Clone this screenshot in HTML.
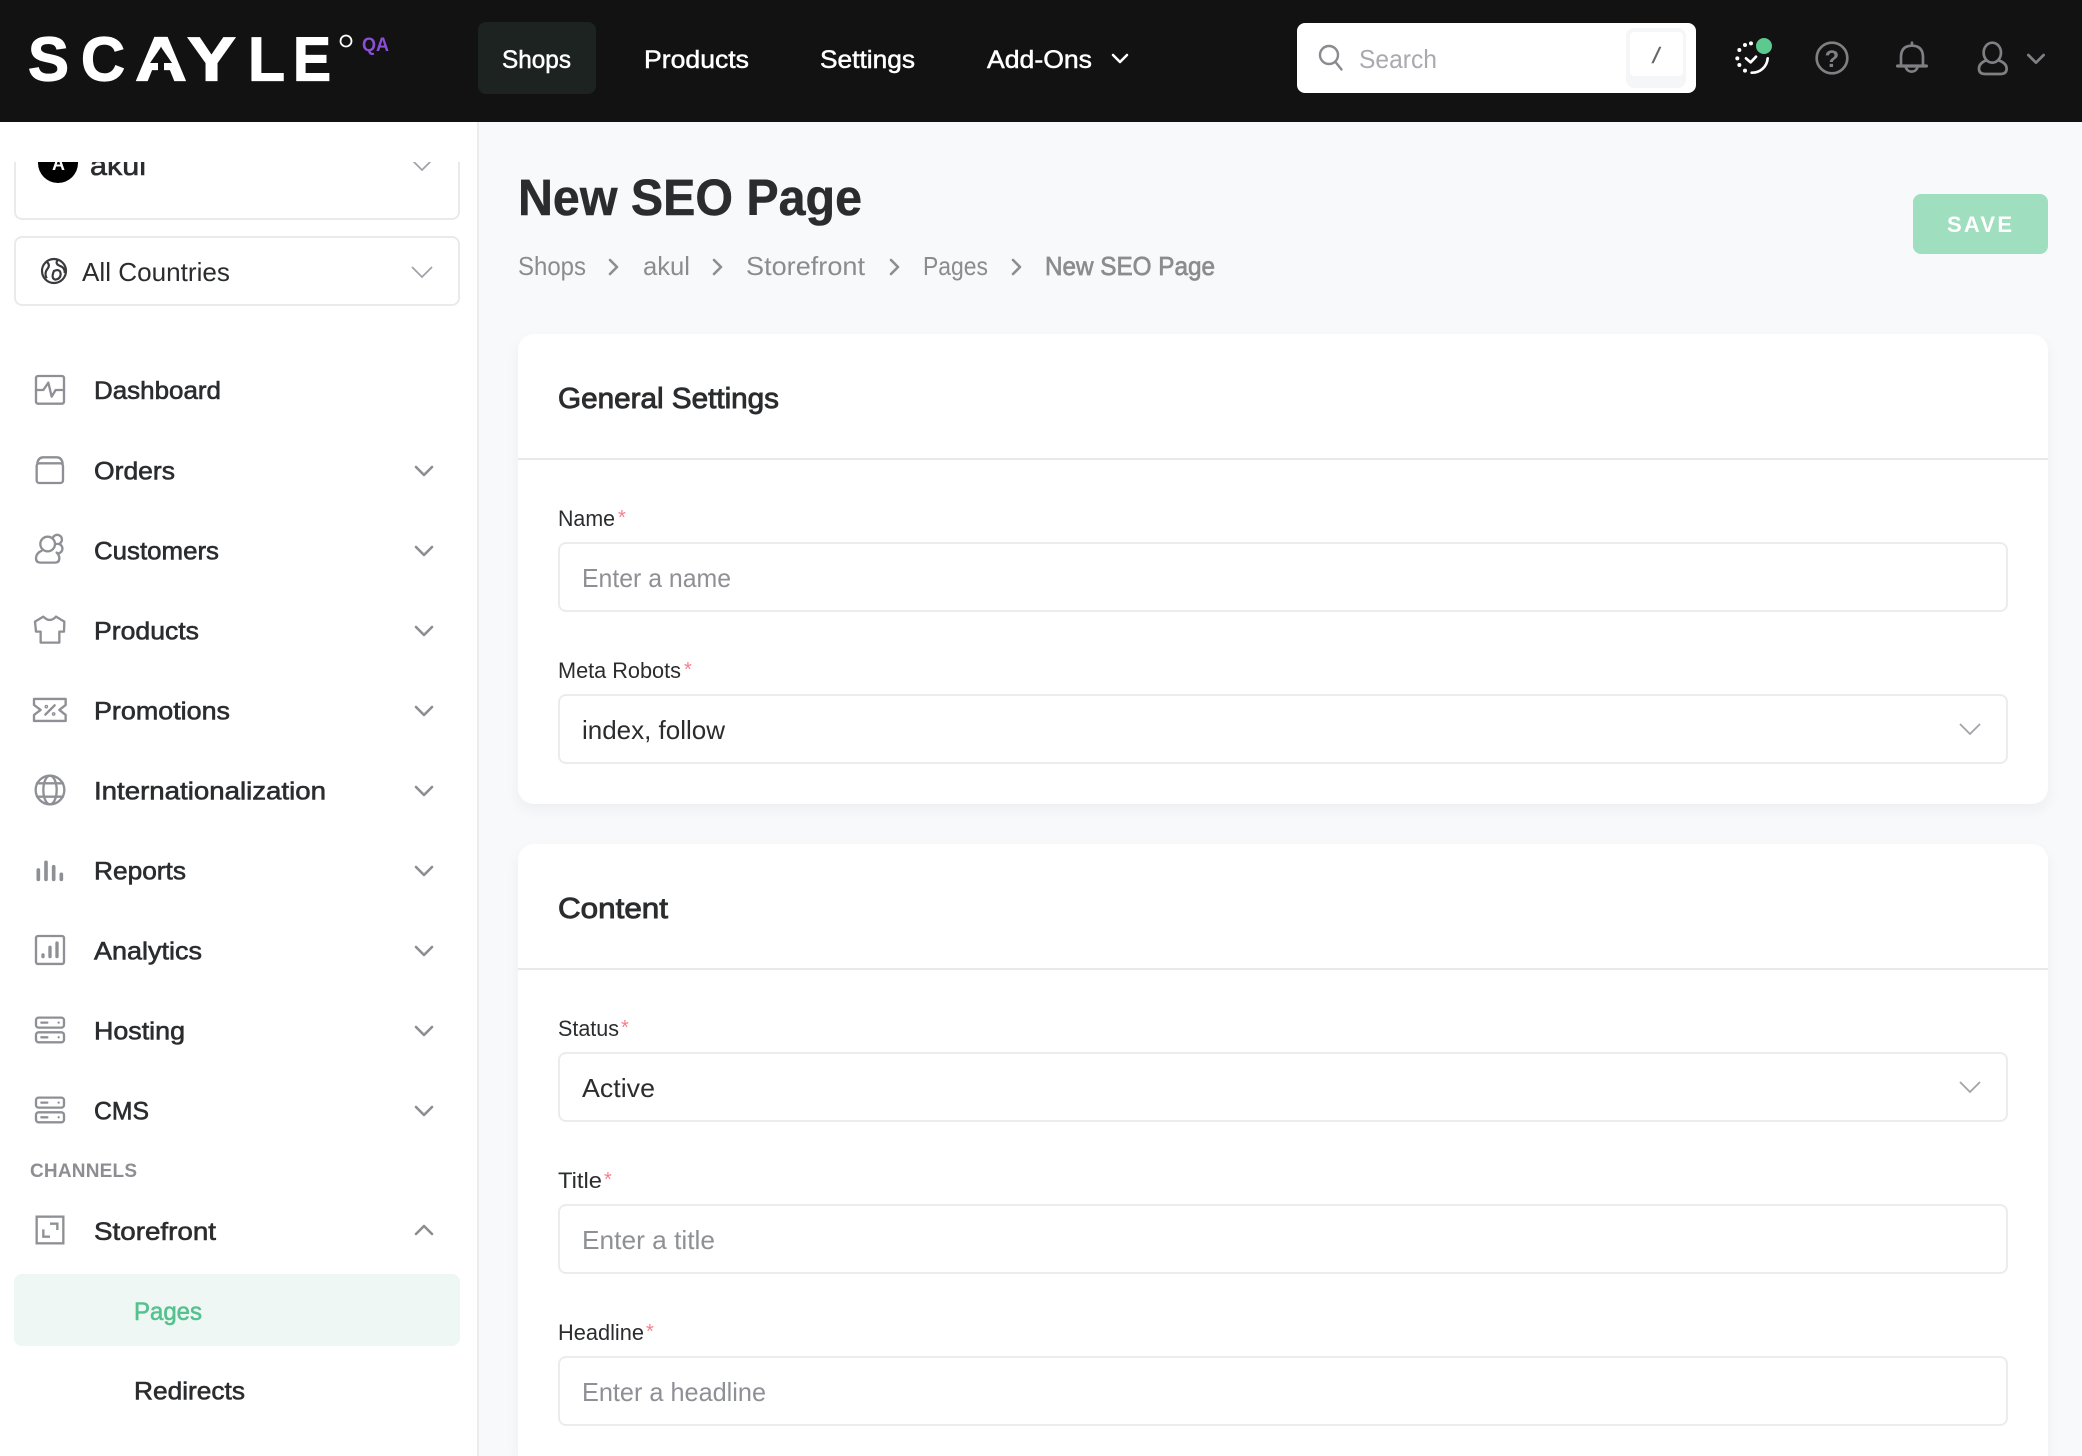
<!DOCTYPE html>
<html lang="en"><head><meta charset="utf-8"><title>New SEO Page</title>
<style>
html,body{margin:0;padding:0;width:2082px;height:1456px;overflow:hidden;background:#f8f9fb;font-family:"Liberation Sans",sans-serif}
.wrap{position:relative;width:2082px;height:1456px;overflow:hidden}
.b{position:absolute;box-sizing:border-box}
.hdr{left:0;top:0;width:2082px;height:122px;background:#121212}
.side{left:0;top:122px;width:479px;height:1334px;background:#fff;border-right:2px solid #ececee}
.card{background:#fff;border-radius:16px;box-shadow:0 6px 14px rgba(30,35,50,.05)}
.inp{background:#fff;border:2px solid #ebecee;border-radius:8px}
svg{position:absolute;left:0;top:0;display:block}
text{font-family:"Liberation Sans",sans-serif}
.n{font-size:25px;fill:#2b2c2e;stroke:#2b2c2e;stroke-width:.6}
.h{font-size:25px;fill:#fff;stroke:#fff;stroke-width:.5}
.c{font-size:26px;fill:#8b8c90}
.l{font-size:22px;fill:#2b2c2e}
.p{font-size:26px;fill:#8f9095}
.v{font-size:26px;fill:#2b2c2e}
.t{font-size:29px;fill:#2b2c2e;stroke:#2b2c2e;stroke-width:.9}
.r{font-size:20px;fill:#f87c8c}
.lg{font-size:62px;font-weight:bold;fill:#fff;stroke:#fff;stroke-width:1.2}
.ic{fill:none;stroke:#8f9095;stroke-width:7;stroke-linecap:round;stroke-linejoin:round}
.ch{fill:none;stroke:#8d8e92;stroke-width:2.6;stroke-linecap:round;stroke-linejoin:round}
.cl{fill:none;stroke:#a3a4a9;stroke-width:1.8}
</style></head><body><div class="wrap">
<div class="b hdr"></div>
<div class="b" style="left:478px;top:22px;width:118px;height:72px;background:#1c2320;border-radius:8px"></div>
<div class="b" style="left:1297px;top:23px;width:399px;height:70px;background:#fff;border-radius:8px"></div>
<div class="b" style="left:1626px;top:28px;width:60px;height:60px;background:#f5f6f8;border-radius:8px"></div>
<div class="b" style="left:1630px;top:32px;width:53px;height:44px;background:#fff;border-radius:4px"></div>
<div class="b side"></div>
<div class="b" style="left:14px;top:162px;width:446px;height:58px;border:2px solid #eaeaec;border-top:0;border-radius:0 0 8px 8px"></div>
<div class="b" style="left:14px;top:236px;width:446px;height:70px;border:2px solid #eaeaec;border-radius:8px"></div>
<div class="b" style="left:14px;top:1274px;width:446px;height:72px;background:#eef7f3;border-radius:8px"></div>
<div class="b" style="left:1913px;top:194px;width:135px;height:60px;background:#9fdfbf;border-radius:8px"></div>
<div class="b card" style="left:518px;top:334px;width:1530px;height:470px"></div>
<div class="b" style="left:518px;top:458px;width:1530px;height:2px;background:#e8e9eb"></div>
<div class="b inp" style="left:558px;top:542px;width:1450px;height:70px"></div>
<div class="b inp" style="left:558px;top:694px;width:1450px;height:70px"></div>
<div class="b card" style="left:518px;top:844px;width:1530px;height:612px;border-radius:16px 16px 0 0"></div>
<div class="b" style="left:518px;top:968px;width:1530px;height:2px;background:#e8e9eb"></div>
<div class="b inp" style="left:558px;top:1052px;width:1450px;height:70px"></div>
<div class="b inp" style="left:558px;top:1204px;width:1450px;height:70px"></div>
<div class="b inp" style="left:558px;top:1356px;width:1450px;height:70px"></div>

<svg width="2082" height="1456" viewBox="0 0 2082 1456" xmlns="http://www.w3.org/2000/svg">
<defs><clipPath id="cp"><rect x="0" y="162" width="479" height="100"/></clipPath></defs>

<!-- logo -->
<text class="lg" x="28" y="80.500" textLength="41" lengthAdjust="spacingAndGlyphs">S</text>
<text class="lg" x="81" y="80.500" textLength="44" lengthAdjust="spacingAndGlyphs">C</text>
<text class="lg" x="135" y="80.500" textLength="52" lengthAdjust="spacingAndGlyphs">A</text>
<text class="lg" x="187" y="80.500" textLength="49" lengthAdjust="spacingAndGlyphs">Y</text>
<text class="lg" x="248" y="80.500" textLength="37" lengthAdjust="spacingAndGlyphs">L</text>
<text class="lg" x="293" y="80.500" textLength="38" lengthAdjust="spacingAndGlyphs">E</text>
<g fill="#121212"><polygon points="161,47 150,63 172,63"/><rect x="158" y="60" width="6" height="14"/></g>
<circle cx="346" cy="41" r="5.5" fill="none" stroke="#fff" stroke-width="1.8"/>
<text x="362" y="51" font-size="19" font-weight="bold" fill="#8a4fd6" textLength="27" lengthAdjust="spacingAndGlyphs">QA</text>

<!-- top nav -->
<text class="h" x="502" y="68" textLength="69" lengthAdjust="spacingAndGlyphs">Shops</text>
<text class="h" x="644" y="68" textLength="105" lengthAdjust="spacingAndGlyphs">Products</text>
<text class="h" x="820" y="68" textLength="95" lengthAdjust="spacingAndGlyphs">Settings</text>
<text class="h" x="987" y="68" textLength="105" lengthAdjust="spacingAndGlyphs">Add-Ons</text>
<path d="M1113 55l7 7 7-7" fill="none" stroke="#fff" stroke-width="2.6" stroke-linecap="round" stroke-linejoin="round"/>

<!-- search -->
<circle cx="1329" cy="55" r="9" fill="none" stroke="#8a8a8f" stroke-width="2.4"/>
<path d="M1335.5 62l6 7.5" stroke="#8a8a8f" stroke-width="2.4" stroke-linecap="round"/>
<text x="1359" y="68" font-size="26" fill="#a9aab0" textLength="78" lengthAdjust="spacingAndGlyphs">Search</text>
<text x="1653" y="63" font-size="22" font-style="italic" fill="#666" stroke="#666" stroke-width=".5">/</text>

<!-- header icons -->
<g transform="translate(1720,30) scale(.3333)" fill="none" stroke-linecap="round" stroke-linejoin="round">
<path d="M143 85A46 46 0 0 1 95 128" stroke="#fff" stroke-width="8"/>
<g fill="#fff"><circle cx="75" cy="122" r="6"/><circle cx="58" cy="105" r="6"/><circle cx="52" cy="85" r="6"/><circle cx="58" cy="60" r="6"/><circle cx="75" cy="45" r="6"/><circle cx="93" cy="40" r="6"/></g>
<path d="M78 85L92 97 108 80" stroke="#fff" stroke-width="8"/>
<circle cx="132" cy="48" r="24" fill="#5cc98f"/>
<g stroke="#808084" stroke-width="8">
<circle cx="336" cy="84" r="46"/>
<path d="M533 108H619" stroke-width="10"/>
<path d="M543 105V82Q543 47 576 47Q609 47 609 82V105"/>
<path d="M576 38V46"/>
<path d="M558 113A18 18 0 0 0 592 113"/>
<ellipse cx="817" cy="68" rx="26" ry="30"/>
<path d="M797 92Q777 100 777 116Q777 132 795 132H842Q860 132 860 116Q860 100 838 92"/>
<path d="M925 75L948 98 971 75"/>
</g>
</g>
<text x="1824.500" y="67" font-size="24" font-weight="bold" fill="#808084">?</text>

<!-- sidebar top -->
<g clip-path="url(#cp)">
<circle cx="58" cy="163" r="20" fill="#000"/>
<text x="52" y="170" font-size="18" font-weight="bold" fill="#fff">A</text>
<text x="90" y="175" class="n" style="font-size:28px" textLength="56" lengthAdjust="spacingAndGlyphs">akul</text>
<path d="M414 162l8 8 8-8" class="cl" stroke-linecap="round"/>
</g>
<g transform="translate(30,245) scale(.3333)" fill="none" stroke="#3a3a3d" stroke-width="6.500">
<circle cx="72" cy="78" r="36"/>
<path d="M50 50Q62 60 52 72Q42 84 50 100M84 44Q74 56 88 62Q106 68 104 84M72 78Q90 70 92 86Q92 102 76 104Q62 100 72 78Z"/>
</g>
<text class="v" x="82" y="281" textLength="148" lengthAdjust="spacingAndGlyphs">All Countries</text>
<path d="M412 267l10 10 10-10" class="cl"/>

<!-- sidebar nav labels -->
<text class="n" x="94" y="399" textLength="127" lengthAdjust="spacingAndGlyphs">Dashboard</text>
<text class="n" x="94" y="479.500" textLength="81" lengthAdjust="spacingAndGlyphs">Orders</text>
<text class="n" x="94" y="559.500" textLength="125" lengthAdjust="spacingAndGlyphs">Customers</text>
<text class="n" x="94" y="639.500" textLength="105" lengthAdjust="spacingAndGlyphs">Products</text>
<text class="n" x="94" y="719.500" textLength="136" lengthAdjust="spacingAndGlyphs">Promotions</text>
<text class="n" x="94" y="799.500" textLength="232" lengthAdjust="spacingAndGlyphs">Internationalization</text>
<text class="n" x="94" y="879.500" textLength="92" lengthAdjust="spacingAndGlyphs">Reports</text>
<text class="n" x="94" y="959.500" textLength="108" lengthAdjust="spacingAndGlyphs">Analytics</text>
<text class="n" x="94" y="1039.500" textLength="91" lengthAdjust="spacingAndGlyphs">Hosting</text>
<text class="n" x="94" y="1119.500" textLength="55" lengthAdjust="spacingAndGlyphs">CMS</text>
<text x="30" y="1177" font-size="19" font-weight="bold" fill="#8d8e92" textLength="107" lengthAdjust="spacing">CHANNELS</text>
<text class="n" x="94" y="1240" textLength="122" lengthAdjust="spacingAndGlyphs">Storefront</text>
<text class="n" x="134" y="1320" style="fill:#55c18f;stroke:#55c18f" textLength="68" lengthAdjust="spacingAndGlyphs">Pages</text>
<text class="n" x="134" y="1399.500" textLength="111" lengthAdjust="spacingAndGlyphs">Redirects</text>

<!-- sidebar chevrons -->
<g class="ch">
<path d="M416 467l8 8 8-8M416 547l8 8 8-8M416 627l8 8 8-8M416 707l8 8 8-8M416 787l8 8 8-8M416 867l8 8 8-8M416 947l8 8 8-8M416 1027l8 8 8-8M416 1107l8 8 8-8M416 1234l8-8 8 8"/>
</g>

<!-- sidebar icons -->
<g class="ic" transform="translate(0,340) scale(.3333)">
<rect x="108" y="108" width="84" height="83" rx="6"/>
<path d="M108 150H130L145 128 155 170 167 150H192"/>
<rect x="110" y="370" width="79" height="59" rx="8"/>
<path d="M112 370Q115 352 130 352H170Q185 352 188 370"/>
<circle cx="143" cy="612" r="22"/>
<path d="M125 632Q108 640 108 655Q108 668 122 668H165Q178 668 178 655Q178 645 170 638"/>
<path d="M158 596A14 14 0 1 1 180 610M170 612A13 13 0 1 1 176 640"/>
<path d="M130 830L105 845L108 875H122V908H178V875H192L193 845L168 830Q150 850 130 830Z"/>
<path d="M102 1077H197V1095L178 1110 197 1125V1143H102V1125L122 1110 102 1095Z"/>
<path d="M136 1124L164 1096"/>
<circle cx="139" cy="1100" r="2"/><circle cx="161" cy="1122" r="2"/>
</g>
<g class="ic" transform="translate(0,740) scale(.3333)">
<circle cx="150" cy="150" r="43"/>
<ellipse cx="150" cy="150" rx="20" ry="43"/>
<path d="M111 130H189M111 170H189"/>
<path d="M115 390V418M138 367V418M161 380V418M184 403V418" stroke-width="11"/>
<rect x="108" y="588" width="84" height="84" rx="6"/>
<path d="M129 645V650M150 622V650M171 609V650" stroke-width="10"/>
<rect x="108" y="833" width="84" height="30" rx="8"/><rect x="108" y="877" width="84" height="30" rx="8"/>
<path d="M124 848H142M124 892H142M176 848H176.100M176 892H176.100"/>
<rect x="108" y="1073" width="84" height="30" rx="8"/><rect x="108" y="1117" width="84" height="30" rx="8"/>
<path d="M124 1088H142M124 1132H142M176 1088H176.100M176 1132H176.100"/>
</g>
<g class="ic" transform="translate(0,1130) scale(.3333)" style="stroke-linecap:butt;stroke-linejoin:miter">
<rect x="110" y="260" width="80" height="80"/>
<path d="M150 281H172V300M130 298V320H150"/>
</g>

<!-- page head -->
<text x="518" y="215" font-size="51" font-weight="bold" fill="#2b2c2e" stroke="#2b2c2e" stroke-width=".5" textLength="344" lengthAdjust="spacingAndGlyphs">New SEO Page</text>
<text class="c" x="518" y="275" textLength="68" lengthAdjust="spacingAndGlyphs">Shops</text>
<text class="c" x="643" y="275" textLength="47" lengthAdjust="spacingAndGlyphs">akul</text>
<text class="c" x="746" y="275" textLength="119" lengthAdjust="spacingAndGlyphs">Storefront</text>
<text class="c" x="923" y="275" textLength="65" lengthAdjust="spacingAndGlyphs">Pages</text>
<text class="c" x="1045" y="275" style="stroke:#8b8c90;stroke-width:.7" textLength="170" lengthAdjust="spacingAndGlyphs">New SEO Page</text>
<path class="ch" d="M610 260l7 7-7 7M714 260l7 7-7 7M891 260l7 7-7 7M1013 260l7 7-7 7"/>
<text x="1947" y="232" font-size="22" font-weight="bold" fill="#fff" textLength="65" lengthAdjust="spacing">SAVE</text>

<!-- general settings -->
<text class="t" x="558" y="408" textLength="221" lengthAdjust="spacingAndGlyphs">General Settings</text>
<text class="l" x="558" y="526" textLength="57" lengthAdjust="spacingAndGlyphs">Name</text>
<text class="r" x="618" y="524">*</text>
<text class="p" x="582" y="587" textLength="149" lengthAdjust="spacingAndGlyphs">Enter a name</text>
<text class="l" x="558" y="678" textLength="123" lengthAdjust="spacingAndGlyphs">Meta Robots</text>
<text class="r" x="684" y="676">*</text>
<text class="v" x="582" y="739" textLength="143" lengthAdjust="spacingAndGlyphs">index, follow</text>
<path class="cl" d="M1960 724l10 10 10-10"/>

<!-- content -->
<text class="t" x="558" y="918" textLength="110" lengthAdjust="spacingAndGlyphs">Content</text>
<text class="l" x="558" y="1036" textLength="61" lengthAdjust="spacingAndGlyphs">Status</text>
<text class="r" x="621" y="1034">*</text>
<text class="v" x="582" y="1097" textLength="73" lengthAdjust="spacingAndGlyphs">Active</text>
<path class="cl" d="M1960 1082l10 10 10-10"/>
<text class="l" x="558" y="1188" textLength="44" lengthAdjust="spacingAndGlyphs">Title</text>
<text class="r" x="604" y="1186">*</text>
<text class="p" x="582" y="1249" textLength="133" lengthAdjust="spacingAndGlyphs">Enter a title</text>
<text class="l" x="558" y="1340" textLength="86" lengthAdjust="spacingAndGlyphs">Headline</text>
<text class="r" x="646" y="1338">*</text>
<text class="p" x="582" y="1401" textLength="184" lengthAdjust="spacingAndGlyphs">Enter a headline</text>
</svg>
</div></body></html>
